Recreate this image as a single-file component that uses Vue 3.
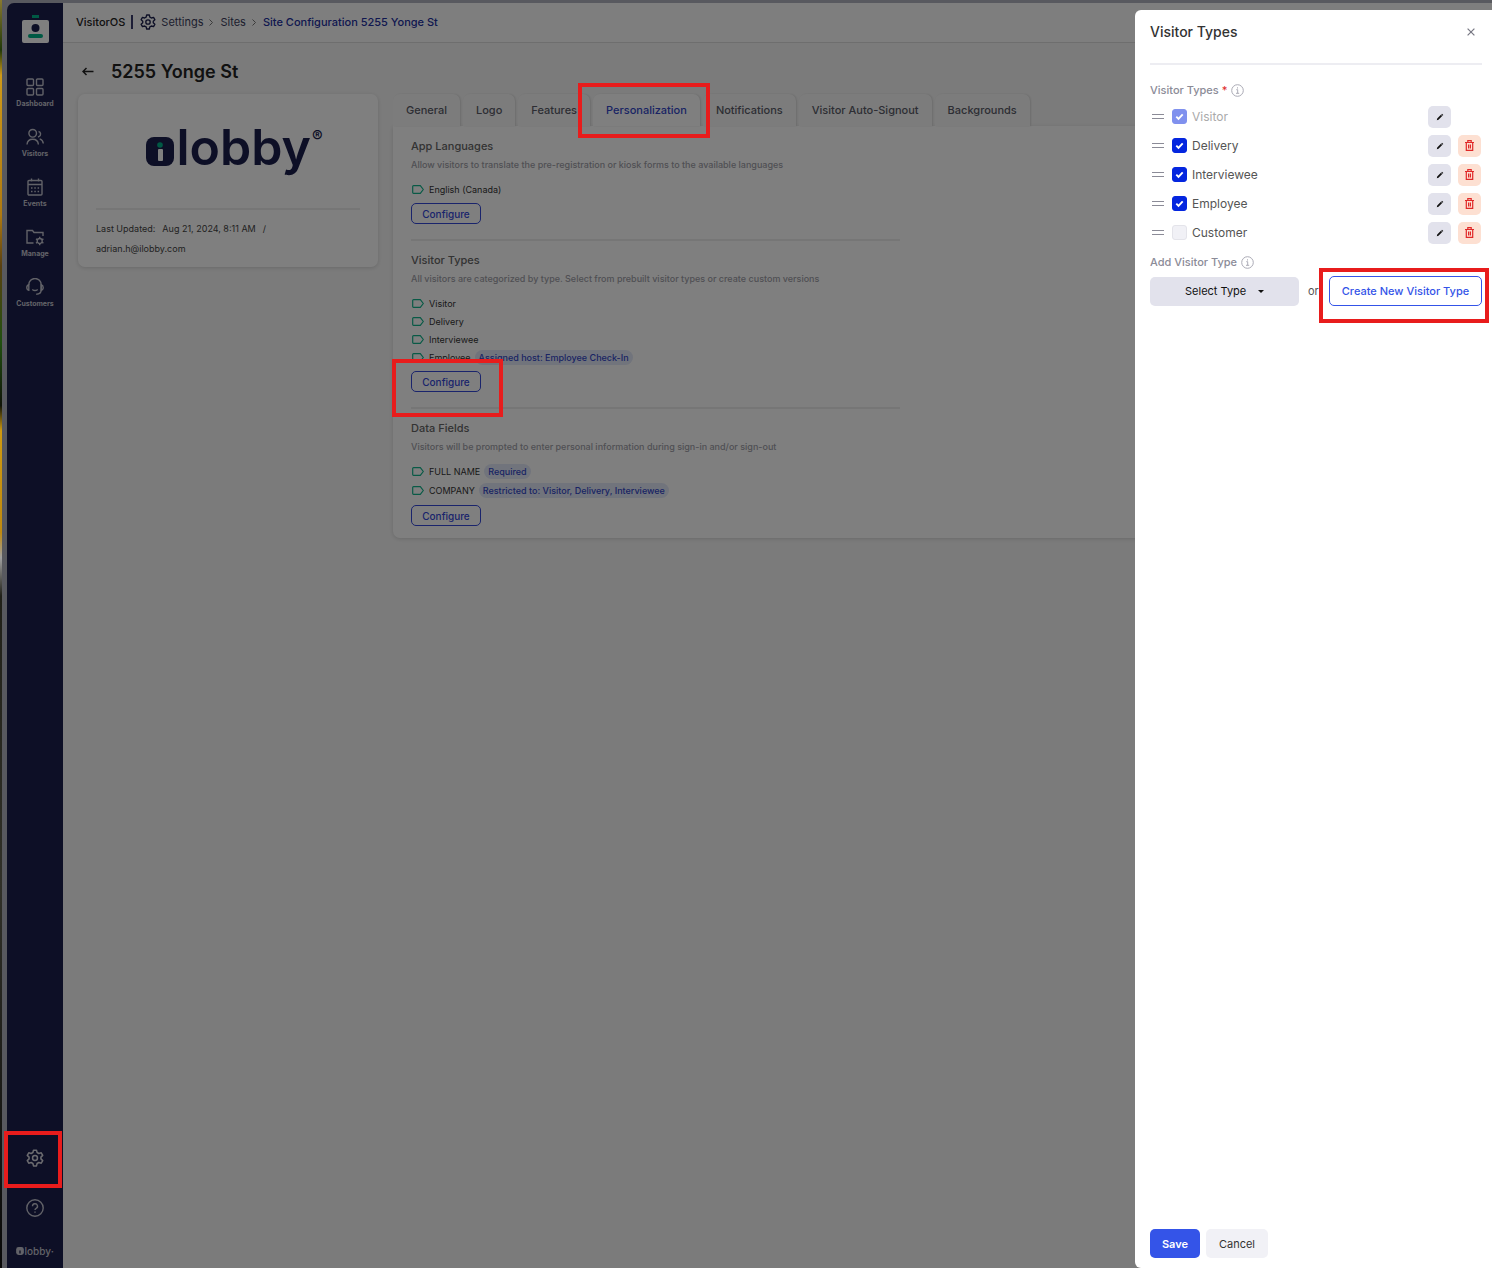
<template>
  <div class="window">
    <aside class="sidebar">
      <svg class="brand-icon" viewBox="0 0 27 28" aria-hidden="true">
        <rect x="10" y="0" width="7" height="3" fill="#00b389" />
        <rect x="0" y="5" width="27" height="23" rx="2" fill="#fff" />
        <circle cx="13.500" cy="13" r="4" fill="#1a1e4c" />
        <rect x="6" y="19" width="15" height="4" rx="2" fill="#00b389" />
      </svg>

      <nav class="nav">
        <a v-for="item in navItems" :key="item.label" href="#" class="nav-item">
          <svg viewBox="0 0 18 18" class="nav-icon" aria-hidden="true">
            <path v-for="d in item.paths" :key="d" :d="d" />
          </svg>
          <span>{{ item.label }}</span>
        </a>
      </nav>

      <div class="sidebar-bottom">
        <a href="#" class="nav-item nav-settings" aria-label="Settings">
          <svg viewBox="0 0 24 24" class="gear" aria-hidden="true">
            <path :d="gearPath" />
            <circle cx="12" cy="12" r="3.300" />
          </svg>
          <span class="marker marker-settings"></span>
        </a>
        <a href="#" class="nav-item nav-help" aria-label="Help">
          <svg viewBox="0 0 18 18" class="nav-icon" aria-hidden="true">
            <circle cx="9" cy="9" r="8.200" />
            <path d="M6.500 7.200a2.500 2.500 0 1 1 3.700 2.200c-.8.500-1.200.9-1.200 1.700M9 12.600v1.200" />
          </svg>
        </a>
        <div class="mini-logo">
          <svg viewBox="0 0 28 29" aria-hidden="true">
            <rect width="28" height="29" rx="9" />
            <path d="M14 13v11" stroke="#1a1e4c" stroke-width="5" />
          </svg>
          <span>lobby</span><sup>•</sup>
        </div>
      </div>
    </aside>

    <div class="page">
      <header class="topbar">
        <strong class="product">VisitorOS</strong>
        <span class="bar"></span>
        <svg viewBox="0 0 24 24" class="gear gear-dark" aria-hidden="true">
          <path :d="gearPath" />
          <circle cx="12" cy="12" r="3.300" />
        </svg>
        <a href="#">Settings</a>
        <svg class="chevron" viewBox="0 0 4 7" aria-hidden="true"><path d="M.5.5l3 3-3 3" /></svg>
        <a href="#">Sites</a>
        <svg class="chevron" viewBox="0 0 4 7" aria-hidden="true"><path d="M.5.5l3 3-3 3" /></svg>
        <a href="#" class="current">Site Configuration 5255 Yonge St</a>
      </header>

      <main class="content">
        <div class="title-row">
          <a href="#" class="back" aria-label="Back">
            <svg viewBox="0 0 12 9" aria-hidden="true"><path d="M11.500 4.500H1M4.500 1L1 4.500 4.500 8" /></svg>
          </a>
          <h1>5255 Yonge St</h1>
        </div>

        <div class="columns">
          <section class="site-card">
            <div class="logo">
              <svg class="logo-mark" viewBox="0 0 28 29" aria-hidden="true">
                <rect width="28" height="29" rx="8" fill="#1a1e4c" />
                <circle cx="14" cy="8" r="2.800" fill="#00b389" />
                <rect x="12" y="12" width="5" height="12" rx="1" fill="#fff" />
              </svg>
              <span class="logo-text">lobby</span>
              <span class="logo-reg">®</span>
            </div>
            <div class="updated">
              <p>
                <span>Last Updated:</span>
                <span>Aug 21, 2024, 8:11 AM</span>
                <span>/</span>
              </p>
              <p>adrian.h@ilobby.com</p>
            </div>
          </section>

          <section class="config">
            <div class="tabs" role="tablist">
              <button
                v-for="tab in tabs"
                :key="tab"
                type="button"
                role="tab"
                class="tab"
                :class="{ active: tab === activeTab }"
                :aria-selected="tab === activeTab"
                @click="activeTab = tab"
              >
                {{ tab }}
                <span v-if="tab === 'Personalization'" class="marker marker-tab"></span>
              </button>
            </div>

            <div class="panel">
              <section v-for="group in groups" :key="group.title" class="group">
                <h2>{{ group.title }}</h2>
                <p class="hint">{{ group.hint }}</p>
                <ul :class="{ roomy: group.roomy }">
                  <li v-for="entry in group.entries" :key="entry.name">
                    <svg class="tag" viewBox="0 0 12 9" aria-hidden="true">
                      <path d="M1.500.7h6.800l3 3.800-3 3.800H1.500a.8.8 0 0 1-.8-.8v-6a.8.8 0 0 1 .8-.8z" />
                    </svg>
                    <span>{{ entry.name }}</span>
                    <span v-if="entry.badge" class="badge">{{ entry.badge }}</span>
                  </li>
                </ul>
                <button type="button" class="configure">
                  Configure
                  <span v-if="group.marked" class="marker marker-configure"></span>
                </button>
              </section>
            </div>
          </section>
        </div>
      </main>
    </div>

    <div class="backdrop">
      <aside class="drawer" role="dialog" aria-labelledby="drawer-title">
        <div class="drawer-head">
          <h2 id="drawer-title">Visitor Types</h2>
          <button type="button" class="close" aria-label="Close">
            <svg viewBox="0 0 8 8" aria-hidden="true"><path d="M.6.6l6.800 6.800M7.400.6L.6 7.400" /></svg>
          </button>
        </div>

        <div class="field-label">
          <span>Visitor Types <em>*</em></span>
          <svg class="info" viewBox="0 0 13 13" aria-hidden="true">
            <circle cx="6.500" cy="6.500" r="5.800" />
            <path d="M5.300 5.700h1.400v3.500M5 9.300h3.200M6.500 3.300v1.200" />
          </svg>
        </div>

        <ul class="types">
          <li v-for="type in types" :key="type.name">
            <svg class="handle" viewBox="0 0 12 5" aria-hidden="true"><path d="M0 .5h12M0 4.500h12" /></svg>
            <label :class="{ locked: type.locked }">
              <input v-model="type.enabled" type="checkbox" :disabled="type.locked" />
              {{ type.name }}
            </label>
            <button type="button" class="icon-btn" :aria-label="`Edit ${type.name}`">
              <svg viewBox="0 0 8 8" class="pencil" aria-hidden="true"><path d="M.8 7.200l.4-1.700 3.700-3.700 1.300 1.300-3.700 3.700zM5.300 1.400l.7-.7 1.300 1.300-.7.7z" /></svg>
            </button>
            <button
              type="button"
              class="icon-btn danger"
              :class="{ hidden: type.locked }"
              :aria-label="`Delete ${type.name}`"
            >
              <svg viewBox="0 0 9 11" class="trash" aria-hidden="true">
                <path d="M0 2.500h9M2.800 2.300V.7h3.400v1.600M1.300 2.700v7.600h6.400V2.700M3.600 4.500v4M5.400 4.500v4" />
              </svg>
            </button>
          </li>
        </ul>

        <div class="field-label">
          <label for="add-type">Add Visitor Type</label>
          <svg class="info" viewBox="0 0 13 13" aria-hidden="true">
            <circle cx="6.500" cy="6.500" r="5.800" />
            <path d="M5.300 5.700h1.400v3.500M5 9.300h3.200M6.500 3.300v1.200" />
          </svg>
        </div>

        <div class="add-row">
          <div class="select">
            <select id="add-type">
              <option>Select Type</option>
            </select>
            <svg viewBox="0 0 6 3" aria-hidden="true"><path d="M0 0h6L3 3z" /></svg>
          </div>
          <span class="or">or</span>
          <button type="button" class="create">
            Create New Visitor Type
            <span class="marker marker-create"></span>
          </button>
        </div>

        <div class="drawer-foot">
          <button type="button" class="save">Save</button>
          <button type="button" class="cancel">Cancel</button>
        </div>
      </aside>
    </div>
  </div>
</template>

<script setup>
import { ref } from 'vue'

const gearPath =
  'M10 1.500h4l.8 3.200 2.300 1.300 3.200-.9 2 3.400-2.400 2.300v2.400l2.400 2.300-2 3.400-3.200-.9-2.300 1.300-.8 3.200h-4l-.8-3.200L6.900 18l-3.200.9-2-3.400 2.400-2.300v-2.400L1.700 8.500l2-3.400 3.200.9 2.300-1.300z'

// Sidebar
const navItems = [
  {
    label: 'Dashboard',
    paths: [
      'M2 1h4.500a1 1 0 0 1 1 1v4.500a1 1 0 0 1-1 1H2a1 1 0 0 1-1-1V2a1 1 0 0 1 1-1z',
      'M11.500 1H16a1 1 0 0 1 1 1v4.500a1 1 0 0 1-1 1h-4.500a1 1 0 0 1-1-1V2a1 1 0 0 1 1-1z',
      'M2 10.500h4.500a1 1 0 0 1 1 1V16a1 1 0 0 1-1 1H2a1 1 0 0 1-1-1v-4.500a1 1 0 0 1 1-1z',
      'M11.500 10.500H16a1 1 0 0 1 1 1V16a1 1 0 0 1-1 1h-4.500a1 1 0 0 1-1-1v-4.500a1 1 0 0 1 1-1z'
    ]
  },
  {
    label: 'Visitors',
    paths: [
      'M6.700 1.500a3.800 3.800 0 1 1 0 7.600 3.800 3.800 0 0 1 0-7.600z',
      'M1 16.500c.3-3.300 2.500-5.200 5.700-5.200s5.400 1.900 5.700 5.200',
      'M12.500 3.500c2.600.4 2.900 4.200.3 5.200l-.8.300M13.700 10.800c2.200.7 3.400 2.300 3.600 4.700'
    ]
  },
  {
    label: 'Events',
    paths: [
      'M3 2.500h12a1 1 0 0 1 1 1V16a1 1 0 0 1-1 1H3a1 1 0 0 1-1-1V3.500a1 1 0 0 1 1-1zM2 6.500h14M5.500.5v3M12.500.5v3',
      'M5 10h1.500M8.300 10h1.500M11.600 10h1.500M5 13.500h1.500M8.300 13.500h1.500M11.600 13.500h1.500'
    ]
  },
  {
    label: 'Manage',
    paths: [
      'M7.500 15H1V2.500h5.500L8 4.500h9V8',
      'M13.700 10.500a2.500 2.500 0 1 1 0 5 2.500 2.500 0 0 1 0-5z',
      'M13.700 8.800v1.700M13.700 15.500v1.700M10 10.900l1.500.9M15.900 14.200l1.500.9M10 15.100l1.500-.9M15.900 11.800l1.500-.9'
    ]
  },
  {
    label: 'Customers',
    paths: [
      'M2.800 6.700a6.200 6.200 0 0 1 12.400 0v5c0 2.800-1.500 4.500-5 4.500',
      'M2.800 6.700v5.500C1.400 12 .8 11 .8 9.500s.6-2.500 2-2.800zM15.200 6.700v5.500c1.400-.2 2-1.200 2-2.700s-.6-2.500-2-2.800z',
      'M6.300 11.500c1.600 1.200 3.800 1.200 5.400 0'
    ]
  }
]

// Site configuration tabs
const tabs = [
  'General',
  'Logo',
  'Features',
  'Personalization',
  'Notifications',
  'Visitor Auto-Signout',
  'Backgrounds'
]
const activeTab = ref('Personalization')

const groups = [
  {
    title: 'App Languages',
    hint: 'Allow visitors to translate the pre-registration or kiosk forms to the available languages',
    entries: [{ name: 'English (Canada)' }]
  },
  {
    title: 'Visitor Types',
    hint: 'All visitors are categorized by type. Select from prebuilt visitor types or create custom versions',
    marked: true,
    entries: [
      { name: 'Visitor' },
      { name: 'Delivery' },
      { name: 'Interviewee' },
      { name: 'Employee', badge: 'Assigned host: Employee Check-In' }
    ]
  },
  {
    title: 'Data Fields',
    hint: 'Visitors will be prompted to enter personal information during sign-in and/or sign-out',
    roomy: true,
    entries: [
      { name: 'FULL NAME', badge: 'Required' },
      { name: 'COMPANY', badge: 'Restricted to: Visitor, Delivery, Interviewee' }
    ]
  }
]

// Drawer
const types = ref([
  { name: 'Visitor', enabled: true, locked: true },
  { name: 'Delivery', enabled: true },
  { name: 'Interviewee', enabled: true },
  { name: 'Employee', enabled: true },
  { name: 'Customer', enabled: false }
])
</script>

<style>
body {
  background: #b1b2be;
}
</style>

<style scoped>
.window {
  display: flex;
  box-sizing: border-box;
  min-height: 100vh;
  padding: 3px 0 0 5px;
  border-style: solid;
  border-image: linear-gradient(#8a7a30, #203808 4%, #d09a18 6%, #b07a10 17%, #5a4010 21%, #205010 27%, #101408 32%, #d09a10 34%, #c08a10 42%, #a0a0a0 44%, #202018 47%, #303028 70%, #080808) 1;
  border-width: 0 0 0 2px;
  background: #b1b2be;
  font-family: Inter, "Liberation Sans", sans-serif;
  font-size: 11px;
  color: #333;
}
.window *,
.window *::before {
  box-sizing: border-box;
}
h1,
h2,
p,
ul {
  margin: 0;
  padding: 0;
  list-style: none;
}
a {
  color: inherit;
  text-decoration: none;
}
button,
select {
  font: inherit;
  padding: 0;
  cursor: pointer;
}
svg {
  display: block;
  flex: none;
  fill: none;
}

/* Highlight frames */
.marker {
  position: absolute;
  z-index: 10;
  border: 4px solid #e81c1c;
  pointer-events: none;
}
.marker-settings {
  inset: -18px 1px -21px -3px;
}
.marker-tab {
  inset: -11px -10px -12px -15px;
}
.marker-configure {
  inset: -13px -23px -26px -20px;
}
.marker-create {
  inset: -9px -8px -18px -11px;
}

/* Sidebar */
.sidebar {
  display: flex;
  flex-direction: column;
  flex: none;
  width: 56px;
  padding-top: 12px;
  border-top-left-radius: 7px;
  background: #1a1e4c;
  color: #c4c5d0;
}
.brand-icon {
  width: 27px;
  height: 28px;
  margin: 0 auto 35px;
}
.nav {
  display: flex;
  flex-direction: column;
  gap: 19px;
}
.nav-item {
  position: relative;
  display: flex;
  flex-direction: column;
  align-items: center;
  gap: 3px;
  font-size: 7px;
  font-weight: 700;
  line-height: 10px;
}
.nav-icon {
  width: 18px;
  height: 18px;
  stroke: #c4c5d0;
  stroke-width: 1.400;
}
.sidebar-bottom {
  margin-top: auto;
  padding-bottom: 9px;
}
.nav-settings {
  margin-bottom: 32px;
}
.nav-help {
  margin-bottom: 26px;
}
.gear {
  width: 18px;
  height: 18px;
  stroke: #d8d8e0;
  stroke-width: 2;
  stroke-linejoin: round;
}
.mini-logo {
  display: flex;
  justify-content: center;
  align-items: center;
  font-size: 10px;
  font-weight: 500;
  line-height: 16px;
}
.mini-logo svg {
  width: 8px;
  height: 8px;
  fill: #c4c5d0;
}
.mini-logo sup {
  font-size: 5px;
}

/* Top bar */
.page {
  flex: 1;
  min-width: 0;
  background: #f7f7f7;
}
.topbar {
  display: flex;
  align-items: center;
  height: 40px;
  padding: 0 0 2px 13px;
  border-bottom: 1px solid #dcdcdc;
  background: #fdfdfd;
  color: #3a3d5c;
}
.product {
  color: #222;
  font-weight: 500;
}
.bar {
  width: 2px;
  height: 14px;
  margin: 0 7px 0 6px;
  background: #3a3d6c;
}
.gear-dark {
  width: 16px;
  height: 16px;
  margin-right: 5px;
  stroke: #1a1e4c;
}
.chevron {
  width: 4px;
  height: 7px;
  margin: 2px 7px 0 6px;
  stroke: #777;
}
.current {
  color: #2230a0;
  font-weight: 500;
}

/* Content */
.content {
  padding: 15px;
}
.title-row {
  display: flex;
  align-items: center;
  gap: 17px;
  height: 26px;
  margin-bottom: 10px;
  padding-left: 4px;
}
.back svg {
  width: 12px;
  height: 9px;
  stroke: #222;
  stroke-width: 1.500;
}
h1 {
  color: #222;
  font-size: 18px;
  font-weight: 600;
}
.columns {
  display: flex;
  align-items: flex-start;
  gap: 15px;
}
.site-card {
  flex: none;
  width: 300px;
  padding: 0 18px 8px;
  border-radius: 7px;
  background: #fff;
  box-shadow: 0 1px 4px rgba(0, 0, 0, 0.15);
}
.logo {
  display: flex;
  justify-content: center;
  height: 116px;
  padding-left: 13px;
  border-bottom: 2px solid #ececec;
  color: #1a1e4c;
}
.logo-mark {
  width: 28px;
  height: 29px;
  margin-top: 43px;
}
.logo-text {
  margin: 23px 0 0 2px;
  font-size: 50px;
  font-weight: 600;
  line-height: 60px;
}
.logo-reg {
  margin: 33px 0 0 1px;
  font-size: 16px;
  font-weight: 600;
  line-height: 18px;
}
.updated {
  padding-top: 9px;
  color: #444;
  font-size: 9px;
  line-height: 20px;
}
.updated p {
  display: flex;
  gap: 7px;
}

/* Tabs */
.config {
  flex: 1;
  min-width: 0;
}
.tabs {
  display: flex;
  gap: 3px;
}
.tab {
  position: relative;
  height: 32px;
  padding: 0 13px;
  border: 0;
  border-radius: 7px 7px 0 0;
  background: #f9f9f9;
  box-shadow: 1px 0 2px rgba(0, 0, 0, 0.12);
  color: #5a5c68;
  font-size: 11px;
  font-weight: 500;
}
.tab.active {
  background: #fff;
  color: #3448c8;
}
.panel {
  padding: 10px 18px 12px;
  border-radius: 0 0 7px 7px;
  background: #fff;
  box-shadow: 0 1px 4px rgba(0, 0, 0, 0.15);
}
.group + .group {
  margin-top: 15px;
}
.group + .group::before {
  content: "";
  display: block;
  max-width: 489px;
  height: 2px;
  margin-bottom: 9px;
  background: #ececec;
}
.group h2 {
  color: #666;
  font-size: 11px;
  font-weight: 500;
  line-height: 20px;
}
.hint {
  color: #a0a0a8;
  font-size: 9px;
  font-weight: 500;
  line-height: 18px;
}
.group ul {
  margin: 6px 0 5px;
}
.group li {
  display: flex;
  align-items: center;
  height: 18px;
  color: #333;
  font-size: 9px;
}
.group .roomy li {
  height: 19px;
}
.tag {
  width: 12px;
  height: 9px;
  margin: 0 5px 0 1px;
  stroke: #12b48c;
  stroke-width: 1.200;
}
.badge {
  margin-left: 4px;
  padding: 0 4px;
  border-radius: 8px;
  background: #e3e8f8;
  color: #3448c8;
  font-weight: 500;
  line-height: 15px;
}
.configure {
  position: relative;
  display: block;
  width: 70px;
  height: 21px;
  border: 1px solid #3448d8;
  border-radius: 5px;
  background: transparent;
  color: #3448d8;
  font-size: 10px;
  font-weight: 500;
}

/* Drawer */
.backdrop {
  position: fixed;
  z-index: 5;
  inset: 0 0 0 2px;
  display: flex;
  justify-content: flex-end;
  padding-top: 10px;
  background: rgba(0, 0, 0, 0.5);
}
.drawer {
  display: flex;
  flex-direction: column;
  width: 357px;
  padding: 0 10px 10px 15px;
  border-radius: 6px 0 0 6px;
  background: #fff;
}
.drawer-head {
  display: flex;
  justify-content: space-between;
  height: 55px;
  margin-bottom: 15px;
  padding: 12px 7px 0 0;
  border-bottom: 2px solid #ededf2;
}
.drawer-head h2 {
  color: #333;
  font-size: 14px;
  font-weight: 500;
  line-height: 20px;
}
.close {
  align-self: flex-start;
  margin-top: 6px;
  border: 0;
  background: none;
}
.close svg {
  width: 8px;
  height: 8px;
  stroke: #777783;
  stroke-width: 1.200;
}
.field-label {
  display: flex;
  align-items: center;
  gap: 4px;
  height: 20px;
  color: #8b8b97;
  font-weight: 500;
}
.field-label em {
  color: #e03030;
  font-style: normal;
}
.info {
  width: 13px;
  height: 13px;
  margin-top: 1px;
  stroke: #aaaab5;
}
.types {
  margin: 2px 0 5px;
}
.types li {
  display: flex;
  align-items: center;
  gap: 7px;
  height: 29px;
  padding: 0 1px 0 2px;
}
.handle {
  width: 12px;
  height: 5px;
  stroke: #8b8b97;
}
.types label {
  display: flex;
  align-items: center;
  flex: 1;
  gap: 5px;
  color: #555;
  font-size: 12px;
}
.types label.locked {
  color: #aaa;
}
.types input {
  appearance: none;
  width: 15px;
  height: 15px;
  margin: 0 0 0 1px;
  border: 1px solid #e4e4ea;
  border-radius: 3px;
  background: #f1f1f6;
}
.types input:checked {
  border-color: #0426df;
  background: #0426df url("data:image/svg+xml,%3Csvg xmlns='http://www.w3.org/2000/svg' viewBox='0 0 9 9'%3E%3Cpath d='M1.300 4.700l2.200 2.200L7.700 2.400' fill='none' stroke='white' stroke-width='1.900'/%3E%3C/svg%3E") center / 9px no-repeat;
}
.types input:disabled {
  opacity: 0.5;
}
.icon-btn {
  display: grid;
  place-items: center;
  width: 23px;
  height: 22px;
  border: 0;
  border-radius: 5px;
  background: #e2e2ec;
}
.icon-btn.danger {
  background: #fde0d2;
}
.icon-btn.hidden {
  visibility: hidden;
}
.pencil {
  width: 8px;
  height: 8px;
  fill: #111;
}
.trash {
  width: 9px;
  height: 11px;
  stroke: #e02828;
  stroke-width: 1.200;
}
.add-row {
  display: flex;
  align-items: center;
  margin-top: 4px;
}
.select {
  display: grid;
  flex: 1;
  align-items: center;
}
.select select,
.select svg {
  grid-area: 1 / 1;
}
.select select {
  appearance: none;
  height: 29px;
  padding-left: 35px;
  border: 0;
  border-radius: 5px;
  background: #e2e2ec;
  color: #111;
}
.select svg {
  width: 6px;
  height: 3px;
  margin-left: 108px;
  fill: #111;
  pointer-events: none;
}
.or {
  width: 30px;
  padding-left: 9px;
  color: #555;
}
.create {
  position: relative;
  width: 153px;
  height: 30px;
  border: 1px solid #3454e8;
  border-radius: 5px;
  background: #fff;
  color: #3454e8;
  font-weight: 500;
}
.drawer-foot {
  display: flex;
  gap: 6px;
  margin-top: auto;
}
.save,
.cancel {
  height: 29px;
  border: 0;
  border-radius: 5px;
}
.save {
  width: 50px;
  background: #3454e8;
  color: #fff;
  font-weight: 600;
}
.cancel {
  width: 62px;
  background: #f1f1f6;
  color: #333;
}
</style>
